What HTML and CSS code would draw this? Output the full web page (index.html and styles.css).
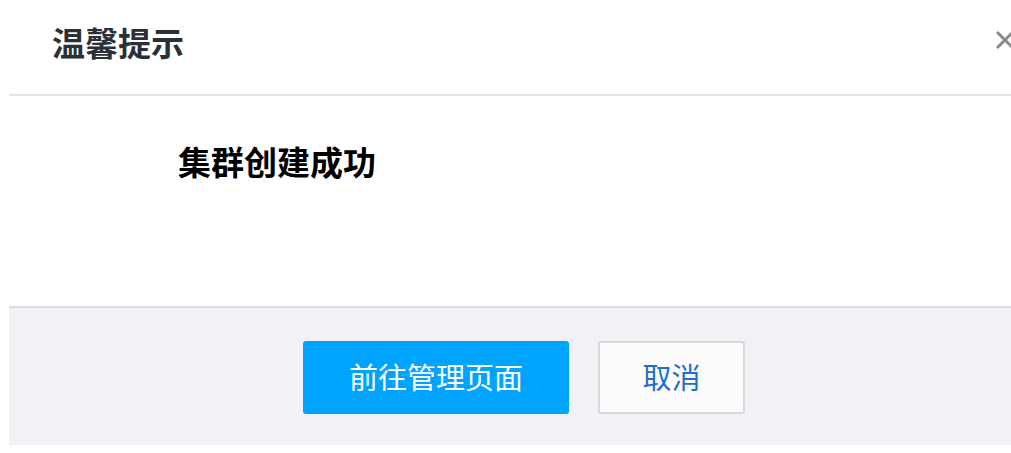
FILE: index.html
```html
<!DOCTYPE html>
<html lang="zh-CN">
<head>
  <meta charset="UTF-8" />
  <meta name="viewport" content="width=device-width, initial-scale=1.0" />
  <title>温馨提示</title>
  <link rel="stylesheet" href="styles.css">
</head>
<body>
  <div class="dialog">
    <div class="dialog-header">
      <h3 class="dialog-title">温馨提示</h3>
      <button class="dialog-close" aria-label="关闭">
        <svg width="20" height="20" viewBox="0 0 20 20">
          <path d="M2 2 L18 18 M18 2 L2 18" stroke="#8a8a8a" stroke-width="3" fill="none" />
        </svg>
      </button>
    </div>

    <div class="dialog-body">
      <p class="dialog-message">集群创建成功</p>
    </div>

    <div class="dialog-footer">
      <button class="btn btn-primary">前往管理页面</button>
      <button class="btn btn-default">取消</button>
    </div>
  </div>
</body>
</html>
```

FILE: styles.css
```css
html, body {
  margin: 0;
  overflow: hidden;
  background-color: #fff;
}

body {
  font-family: "Noto Sans CJK SC", "Noto Sans", sans-serif;
  color: #2b3038;
}

.dialog {
  margin-left: 9px;
  width: 1030px;
  background-color: #fff;
}

.dialog-header {
  display: flex;
  align-items: center;
  justify-content: space-between;
  height: 94px;
  padding: 0 0 0 43px;
  border-bottom: 2px solid #e2e4e8;
}

.dialog-title {
  margin: 0 0 10px;
  font-size: 33px;
  font-weight: 700;
  line-height: 1;
  color: #2b3038;
}

.dialog-close {
  flex-shrink: 0;
  border: none;
  background: none;
  padding: 0;
  margin: 0 24px 14px 0;
  width: 20px;
  height: 20px;
  cursor: pointer;
}

.dialog-close svg {
  display: block;
}

.dialog-body {
  height: 210px;
  padding-left: 169px;
  box-sizing: border-box;
  padding-top: 43px;
}

.dialog-message {
  margin: 0;
  font-size: 33px;
  font-weight: 700;
  line-height: 44px;
  color: #000;
}

.dialog-footer {
  display: flex;
  justify-content: center;
  gap: 29px;
  height: 139px;
  padding-top: 33px;
  box-sizing: border-box;
  border-top: 2px solid #dcdee2;
  background-color: #f0f2f5;
}

.btn {
  height: 73px;
  padding: 0 0 4px;
  font-family: inherit;
  font-size: 29px;
  border-radius: 3px;
  cursor: pointer;
}

.btn-primary {
  width: 266px;
  border: none;
  background-color: #00a4ff;
  color: #fff;
}

.btn-default {
  width: 147px;
  border: 2px solid #d6d8db;
  background-color: #fcfcfd;
  color: #1e6fc9;
}
```
